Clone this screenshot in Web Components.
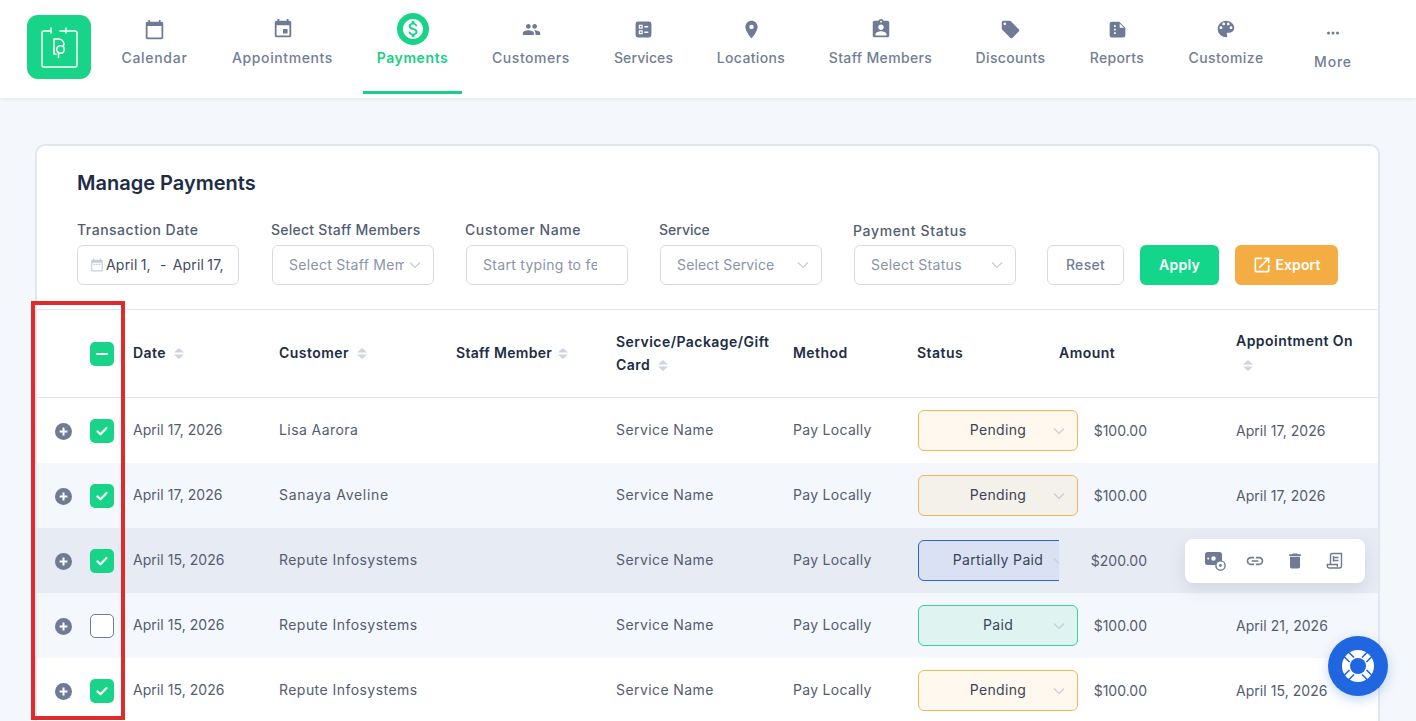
<!DOCTYPE html>
<html lang="en">
<head>
<meta charset="utf-8">
<title>Manage Payments</title>
<style>
  html, body { margin: 0; height: 100%; overflow: hidden; }
  body { background: #f4f7fb; font-family: Inter, "Liberation Sans", sans-serif; color: #535d71; }
</style>
</head>
<body>
<bp-shell>
  <bp-header>
    <bp-logo></bp-logo>
    <bp-nav-item label="Calendar" icon="calendar" style="width:95px;--ls:.7px"></bp-nav-item>
    <bp-nav-item label="Appointments" icon="event" style="width:129px;--ls:.6px"></bp-nav-item>
    <bp-nav-item label="Payments" icon="money" active style="width:99px;--ls:.6px"></bp-nav-item>
    <bp-nav-item label="Customers" icon="people" style="width:106px;--ls:.55px"></bp-nav-item>
    <bp-nav-item label="Services" icon="services" style="width:87px;--ls:.1px"></bp-nav-item>
    <bp-nav-item label="Locations" icon="place" style="width:96px"></bp-nav-item>
    <bp-nav-item label="Staff Members" icon="staff" style="width:131px"></bp-nav-item>
    <bp-nav-item label="Discounts" icon="offer" style="width:97px"></bp-nav-item>
    <bp-nav-item label="Reports" icon="report" style="width:84px"></bp-nav-item>
    <bp-nav-item label="Customize" icon="palette" style="width:102px;--ls:.45px"></bp-nav-item>
    <bp-nav-item label="More" icon="dots" low style="width:80px;--ls:.8px"></bp-nav-item>
  </bp-header>

  <bp-card heading="Manage Payments">
    <bp-filters>
      <bp-field label="Transaction Date" first style="--ls:.5px"><bp-daterange></bp-daterange></bp-field>
      <bp-field label="Select Staff Members" style="--ls:.25px"><bp-select placeholder="Select Staff Members"></bp-select></bp-field>
      <bp-field label="Customer Name" style="--ls:.6px"><bp-select placeholder="Start typing to fetch" plain></bp-select></bp-field>
      <bp-field label="Service" style="--ls:0px"><bp-select placeholder="Select Service" style="--ls:.15px"></bp-select></bp-field>
      <bp-field label="Payment Status" low style="--ls:.65px"><bp-select placeholder="Select Status"></bp-select></bp-field>
      <bp-button kind="ghost" style="width:77px">Reset</bp-button>
      <bp-button kind="green" style="width:79px">Apply</bp-button>
      <bp-button kind="orange" icon style="width:103px">Export</bp-button>
    </bp-filters>
    <bp-table>
      <bp-head></bp-head>
      <bp-row date="April 17, 2026" customer="Lisa Aarora" status="Pending" amount="$100.00" on="April 17, 2026" checked style="--name-ls:.42px"></bp-row>
      <bp-row date="April 17, 2026" customer="Sanaya Aveline" status="Pending" amount="$100.00" on="April 17, 2026" checked stripe style="--name-ls:.7px"></bp-row>
      <bp-row date="April 15, 2026" customer="Repute Infosystems" status="Partially Paid" amount="$200.00" on="" checked hover></bp-row>
      <bp-row date="April 15, 2026" customer="Repute Infosystems" status="Paid" amount="$100.00" on="April 21, 2026" stripe></bp-row>
      <bp-row date="April 15, 2026" customer="Repute Infosystems" status="Pending" amount="$100.00" on="April 15, 2026" checked></bp-row>
    </bp-table>
  </bp-card>

  <bp-actions></bp-actions>
  <bp-help></bp-help>
  <bp-callout></bp-callout>
</bp-shell>

<script>
const ICONS = {
  calendar: '<path d="M20 3h-1V1h-2v2H7V1H5v2H4c-1.1 0-2 .9-2 2v16c0 1.1.9 2 2 2h16c1.1 0 2-.9 2-2V5c0-1.1-.9-2-2-2zm0 18H4V8h16v13z"/>',
  event: '<path d="M17 12h-5v5h5v-5zM16 1v2H8V1H6v2H5c-1.11 0-1.99.9-1.99 2L3 19c0 1.1.89 2 2 2h14c1.1 0 2-.9 2-2V5c0-1.1-.9-2-2-2h-1V1h-2zm3 18H5V8h14v11z"/>',
  money: '<path d="M12 2C6.48 2 2 6.48 2 12s4.48 10 10 10 10-4.48 10-10S17.52 2 12 2zm1.41 16.09V20h-2.67v-1.93c-1.71-.36-3.16-1.46-3.27-3.4h1.96c.1 1.05.82 1.87 2.65 1.87 1.96 0 2.4-.98 2.4-1.59 0-.83-.44-1.61-2.67-2.14-2.48-.6-4.18-1.62-4.18-3.67 0-1.72 1.39-2.84 3.11-3.21V4h2.67v1.95c1.86.45 2.79 1.86 2.87 3.39H14.3c-.05-1.11-.64-1.87-2.22-1.87-1.5 0-2.4.68-2.4 1.64 0 .84.65 1.39 2.67 1.91s4.18 1.39 4.18 3.91c-.01 1.83-1.38 2.83-3.12 3.16z"/>',
  people: '<path d="M16 11c1.66 0 2.99-1.34 2.99-3S17.66 5 16 5c-1.66 0-3 1.34-3 3s1.34 3 3 3zm-8 0c1.66 0 2.99-1.34 2.99-3S9.66 5 8 5C6.34 5 5 6.34 5 8s1.34 3 3 3zm0 2c-2.33 0-7 1.17-7 3.5V19h14v-2.5c0-2.33-4.67-3.5-7-3.5zm8 0c-.29 0-.62.02-.97.05 1.16.84 1.97 1.97 1.97 3.45V19h6v-2.5c0-2.33-4.67-3.5-7-3.5z"/>',
  services: '<path fill-rule="evenodd" d="M5 2h14a3 3 0 0 1 3 3v14a3 3 0 0 1-3 3H5a3 3 0 0 1-3-3V5a3 3 0 0 1 3-3zm1 4v5h5V6H6zm1.5 1.5h2v2h-2v-2zM13 7.5V9.5h5V7.5h-5zM6 13v5h5v-5H6zm1.5 1.5h2v2h-2v-2zM13 14.5v2h5v-2h-5z"/>',
  place: '<path d="M12 2C8.13 2 5 5.13 5 9c0 5.25 7 13 7 13s7-7.75 7-13c0-3.87-3.13-7-7-7zm0 9.5a2.5 2.5 0 0 1 0-5 2.5 2.5 0 0 1 0 5z"/>',
  staff: '<path d="M19 3h-4.18C14.4 1.84 13.3 1 12 1c-1.3 0-2.4.84-2.82 2H5c-1.1 0-2 .9-2 2v14c0 1.1.9 2 2 2h14c1.1 0 2-.9 2-2V5c0-1.1-.9-2-2-2zm-7 0c.55 0 1 .45 1 1s-.45 1-1 1-1-.45-1-1 .45-1 1-1zm0 4c1.66 0 3 1.34 3 3s-1.34 3-3 3-3-1.34-3-3 1.34-3 3-3zm6 12H6v-1.4c0-2 4-3.1 6-3.1s6 1.1 6 3.1V19z"/>',
  offer: '<path d="M21.41 11.58l-9-9C12.05 2.22 11.55 2 11 2H4c-1.1 0-2 .9-2 2v7c0 .55.22 1.05.59 1.42l9 9c.36.36.86.58 1.41.58.55 0 1.05-.22 1.41-.59l7-7c.37-.36.59-.86.59-1.41 0-.55-.23-1.06-.59-1.42zM5.5 7C4.67 7 4 6.33 4 5.5S4.67 4 5.5 4 7 4.67 7 5.5 6.33 7 5.5 7z"/>',
  report: '<path fill-rule="evenodd" d="M5.5 3H14l7 7v8.5a2.5 2.5 0 0 1-2.5 2.5h-13A2.5 2.5 0 0 1 3 18.500v-13A2.500 2.500 0 0 1 5.500 3zM14.500 5v5h5l-5-5zM8 7v2h2V7H8zm0 4v2h2v-2H8zm0 4v2h2v-2H8z"/>',
  palette: '<path d="M12 3c-4.97 0-9 4.03-9 9s4.03 9 9 9c.83 0 1.5-.67 1.5-1.5 0-.39-.15-.74-.39-1.01-.23-.26-.38-.61-.38-.99 0-.83.67-1.5 1.5-1.5H16c2.76 0 5-2.24 5-5 0-4.42-4.03-8-9-8zm-5.5 9c-.83 0-1.5-.67-1.5-1.5S5.67 9 6.5 9 8 9.67 8 10.5 7.33 12 6.5 12zm3-4C8.67 8 8 7.33 8 6.5S8.67 5 9.5 5s1.5.67 1.5 1.5S10.33 8 9.5 8zm5 0c-.83 0-1.5-.67-1.5-1.5S13.67 5 14.5 5s1.5.67 1.5 1.5S15.33 8 14.5 8zm3 4c-.83 0-1.5-.67-1.5-1.5S16.67 9 17.5 9s1.5.67 1.5 1.5-.67 1.5-1.5 1.5z"/>',
  dots: '<circle cx="6" cy="12" r="2"/><circle cx="12" cy="12" r="2"/><circle cx="18" cy="12" r="2"/>',
  link: '<path d="M3.9 12c0-1.71 1.39-3.1 3.1-3.1h4V7H7c-2.76 0-5 2.24-5 5s2.24 5 5 5h4v-1.9H7c-1.71 0-3.1-1.39-3.1-3.1zM8 13h8v-2H8v2zm9-6h-4v1.9h4c1.71 0 3.1 1.39 3.1 3.1s-1.39 3.1-3.1 3.1h-4V17h4c2.76 0 5-2.24 5-5s-2.24-5-5-5z"/>',
  trash: '<path d="M6 19c0 1.1.9 2 2 2h8c1.1 0 2-.9 2-2V7H6v12zM19 4h-3.5l-1-1h-5l-1 1H5v2h14V4z"/>',
  external: '<path d="M19 19H5V5h7V3H5a2 2 0 0 0-2 2v14a2 2 0 0 0 2 2h14c1.1 0 2-.9 2-2v-7h-2v7zM14 3v2h3.59l-9.83 9.83 1.41 1.41L19 6.41V10h2V3h-7z"/>'
};

const svg = (name, size, color) =>
  `<svg width="${size}" height="${size}" viewBox="0 0 24 24" fill="${color}" aria-hidden="true">${ICONS[name]}</svg>`;

const chevron = `<svg width="12" height="8" viewBox="0 0 12 8" fill="none" stroke="#c5ccd9" stroke-width="1.2"><path d="M1 1.5l5 5 5-5"/></svg>`;
const sortArrows = `<svg width="10" height="11" viewBox="0 0 10 11" fill="#cdd4e2"><path d="M5 0l5 4.6H0zM5 11L0 6.4h10z"/></svg>`;

class BpShell extends HTMLElement {
  constructor() {
    super();
    this.attachShadow({mode: 'open'});
    this.shadowRoot.innerHTML = `
      <style>:host { display: block; position: relative; height: 721px; overflow: hidden; }</style>
      <slot></slot>`;
  }
}

class BpHeader extends HTMLElement {
  constructor() {
    super();
    this.attachShadow({mode: 'open'});
    this.shadowRoot.innerHTML = `
      <style>
        :host {
          display: flex; align-items: flex-start; gap: 16px;
          height: 98px; padding-left: 27px; box-sizing: border-box;
          background: #fff; box-shadow: 0 1px 4px rgba(90, 105, 140, .12);
        }
      </style>
      <slot></slot>`;
  }
}

class BpLogo extends HTMLElement {
  constructor() {
    super();
    this.attachShadow({mode: 'open'});
    this.shadowRoot.innerHTML = `
      <style>
        :host { display: block; flex: none; width: 64px; height: 64px; margin-top: 15px; background: #18d488; border-radius: 11px; }
        svg { display: block; }
      </style>
      <svg width="64" height="64" viewBox="0 0 64 64" fill="none" stroke="#fff" stroke-width="1.5" stroke-linecap="round">
        <path d="M24 16h-7a2 2 0 0 0-2 2v32a2 2 0 0 0 2 2h31a2 2 0 0 0 2-2V18a2 2 0 0 0-2-2H33"/>
        <path d="M24 13v5M39 13v5"/>
        <path d="M27 24v15M27 24h5a5 5 0 0 1 4.500 7"/>
        <circle cx="33.500" cy="34.500" r="3.800"/>
        <path d="M31.500 37v5.500M27 39h2"/>
      </svg>`;
  }
}

class BpNavItem extends HTMLElement {
  constructor() {
    super();
    this.attachShadow({mode: 'open'});
  }

  connectedCallback() {
    const active = this.hasAttribute('active');
    const icon = this.getAttribute('icon');
    const sizes = {calendar: 21, people: 19, services: 19, report: 21, dots: 18, offer: 21, place: 21};
    this.shadowRoot.innerHTML = `
      <style>
        :host {
          display: flex; flex-direction: column; align-items: center; flex: none;
          box-sizing: border-box; height: 94px; padding-top: 13px;
          font: 500 14px/20px Inter, "Liberation Sans", sans-serif; letter-spacing: var(--ls, .35px);
          color: #727e95;
        }
        :host([low]) { padding-top: 17px; }
        :host([active]) { color: #18cf86; font-weight: 600; border-bottom: 3px solid #18cf86; }
        .icon { width: 32px; height: 32px; display: flex; align-items: center; justify-content: center; border-radius: 50%; }
        :host([active]) .icon { background: #18d488; }
        .label { margin-top: 3px; white-space: nowrap; }
      </style>
      <div class="icon">${active ? svg(icon, 24, '#fff') : svg(icon, sizes[icon] || 22, '#6f7b94')}</div>
      <div class="label">${this.getAttribute('label')}</div>`;
  }
}

class BpCard extends HTMLElement {
  constructor() {
    super();
    this.attachShadow({mode: 'open'});
  }

  connectedCallback() {
    this.shadowRoot.innerHTML = `
      <style>
        :host {
          display: block; box-sizing: border-box; width: 1345px; margin: 46px 0 0 35px;
          height: 640px; background: #fff; border: 2px solid #e0e7f3; border-radius: 10px;
        }
        h1 { margin: 0; padding: 22px 0 0 40px; font: 600 20px/30px Inter, "Liberation Sans", sans-serif; color: #202c45; }
      </style>
      <h1>${this.getAttribute('heading')}</h1>
      <slot></slot>`;
  }
}

class BpFilters extends HTMLElement {
  constructor() {
    super();
    this.attachShadow({mode: 'open'});
    this.shadowRoot.innerHTML = `
      <style>
        :host {
          display: flex; align-items: flex-end;
          padding: 22px 0 24px 40px; border-bottom: 1px solid #e1e6f0;
        }
        ::slotted(bp-field) { margin-right: 31px; }
        ::slotted(bp-button) { margin-right: 16px; }
      </style>
      <slot></slot>`;
  }
}

class BpField extends HTMLElement {
  constructor() {
    super();
    this.attachShadow({mode: 'open'});
  }

  connectedCallback() {
    this.shadowRoot.innerHTML = `
      <style>
        :host { display: block; width: 163px; flex: none; }
        label {
          display: block; margin-bottom: 5px; white-space: nowrap;
          font: 500 14px/20px Inter, "Liberation Sans", sans-serif; letter-spacing: var(--ls, .3px); color: #535d71;
        }
        :host([low]) label { margin-bottom: 4px; }
        .ctl { margin-left: 1px; --ls: initial; }
        :host([first]) .ctl { margin-left: 0; }
      </style>
      <label>${this.getAttribute('label')}</label>
      <div class="ctl"><slot></slot></div>`;
  }
}

class BpSelect extends HTMLElement {
  constructor() {
    super();
    this.attachShadow({mode: 'open'});
  }

  connectedCallback() {
    this.shadowRoot.innerHTML = `
      <style>
        :host {
          display: flex; align-items: center; box-sizing: border-box; width: 162px; height: 40px;
          padding: 0 12px 0 16px; border: 1px solid #d6dbe6; border-radius: 6px; background: #fff;
          font: 400 14px/20px Inter, "Liberation Sans", sans-serif; letter-spacing: .3px; color: #8a94a8;
        }
        :host([style]) { letter-spacing: var(--ls); }
        .text { flex: 1; min-width: 0; overflow: hidden; white-space: nowrap; }
        svg { flex: none; margin-left: 5px; }
      </style>
      <span class="text">${this.getAttribute('placeholder')}</span>
      ${this.hasAttribute('plain') ? '<span style="width:18px;flex:none"></span>' : chevron}`;
  }
}

class BpDaterange extends HTMLElement {
  constructor() {
    super();
    this.attachShadow({mode: 'open'});
    this.shadowRoot.innerHTML = `
      <style>
        :host {
          display: flex; align-items: center; box-sizing: border-box; width: 162px; height: 40px;
          padding-left: 13px; border: 1px solid #d6dbe6; border-radius: 6px;
          font: 400 14px/20px Inter, "Liberation Sans", sans-serif; letter-spacing: .2px; word-spacing: -1px; color: #3f4a60;
        }
        svg { flex: none; margin: 0 2px 0 -1px; }
        .part { overflow: hidden; white-space: nowrap; flex: none; }
        .a { width: 48px; }
        .sep { margin: 0 6px 0 6px; }
        .b { width: 50px; }
      </style>
      <svg width="14" height="14" viewBox="0 0 24 24" fill="#c5cddb"><path d="M20 3h-1V1h-2v2H7V1H5v2H4c-1.1 0-2 .9-2 2v16c0 1.1.9 2 2 2h16c1.1 0 2-.9 2-2V5c0-1.1-.9-2-2-2zm0 18H4V8h16v13z"/><path d="M6 10h3v2H6zM10.500 10h3v2h-3zM15 10h3v2h-3z"/></svg>
      <span class="part a">April 1, 2026</span><span class="sep">-</span><span class="part b">April 17, 2026</span>`;
  }
}

class BpButton extends HTMLElement {
  constructor() {
    super();
    this.attachShadow({mode: 'open'});
  }

  connectedCallback() {
    this.shadowRoot.innerHTML = `
      <style>
        :host {
          display: flex; align-items: center; justify-content: center; gap: 3px; flex: none;
          box-sizing: border-box; height: 40px; border-radius: 6px;
          font: 500 14px/20px Inter, "Liberation Sans", sans-serif; letter-spacing: .3px;
        }
        :host([kind=ghost]) { border: 1px solid #d6dbe6; color: #727e95; background: #fff; }
        :host([kind=green]) { background: #14d68a; color: #fff; font-weight: 600; }
        :host([kind=orange]) { background: #f4ad42; color: #fff; font-weight: 600; letter-spacing: .1px; }
      </style>
      ${this.hasAttribute('icon') ? svg('external', 20, '#fff') : ''}<slot></slot>`;
  }
}

class BpTable extends HTMLElement {
  constructor() {
    super();
    this.attachShadow({mode: 'open'});
    this.shadowRoot.innerHTML = `
      <style>
        :host {
          display: block;
          --cols: 96px 146px 177px 160px 177px 124px 142px 177px 142px;
        }
      </style>
      <slot></slot>`;
  }
}

class BpHead extends HTMLElement {
  constructor() {
    super();
    this.attachShadow({mode: 'open'});
    this.shadowRoot.innerHTML = `
      <style>
        :host {
          display: grid; grid-template-columns: var(--cols); align-items: center;
          height: 88px; box-sizing: border-box; border-bottom: 1px solid #dfe4ee;
          font: 600 14px/23px Inter, "Liberation Sans", sans-serif; letter-spacing: .46px; color: #202c45;
        }
        svg { margin-left: 4px; vertical-align: -1px; }
        .t { padding-bottom: 2px; }
        .pick { padding-left: 53px; display: flex; }
        .staff { letter-spacing: .32px; }
        .staff svg { margin-left: 2px; }
        .arrows { display: block; height: 23px; padding: 1px 0 0 3px; }
      </style>
      <div class="pick"><bp-check state="mixed"></bp-check></div>
      <div class="t">Date ${sortArrows}</div>
      <div class="t">Customer ${sortArrows}</div>
      <div class="t staff">Staff Member ${sortArrows}</div>
      <div class="t">Service/Package/Gift<br>Card ${sortArrows}</div>
      <div class="t">Method</div>
      <div class="t">Status</div>
      <div class="t">Amount</div>
      <div class="t">Appointment On<span class="arrows">${sortArrows}</span></div>`;
  }
}

class BpCheck extends HTMLElement {
  constructor() {
    super();
    this.attachShadow({mode: 'open'});
  }

  connectedCallback() {
    const state = this.getAttribute('state');
    const mark = state === 'mixed'
      ? '<svg width="14" height="14" viewBox="0 0 14 14"><path d="M2 7h10" stroke="#fff" stroke-width="2" stroke-linecap="round"/></svg>'
      : state === 'on'
        ? '<svg width="14" height="14" viewBox="0 0 14 14" fill="none"><path d="M2.500 7.400l3 2.800L11.500 4" stroke="#fff" stroke-width="2.200" stroke-linecap="round" stroke-linejoin="round"/></svg>'
        : '';
    this.shadowRoot.innerHTML = `
      <style>
        :host {
          display: flex; align-items: center; justify-content: center; flex: none;
          box-sizing: border-box; width: 24px; height: 24px; border-radius: 5px;
          background: #18d488;
        }
        :host([state=off]) { background: #fff; border: 1px solid #727e95; }
      </style>${mark}`;
  }
}

class BpRow extends HTMLElement {
  constructor() {
    super();
    this.attachShadow({mode: 'open'});
  }

  connectedCallback() {
    const a = name => this.getAttribute(name);
    this.shadowRoot.innerHTML = `
      <style>
        :host {
          display: grid; grid-template-columns: var(--cols); align-items: center;
          height: 65px; background: #fff;
          font: 400 14px/20px Inter, "Liberation Sans", sans-serif; letter-spacing: .42px; color: #535d71;
        }
        :host([stripe]) { background: #f4f7fb; }
        :host([hover]) { background: #e7ebf4; }
        .t { padding-bottom: 2px; }
        .pick { display: flex; align-items: center; padding-left: 18px; gap: 18px; }
        .plus { flex: none; margin-top: 2px; }
        .num { letter-spacing: .05px; }
        .name { letter-spacing: var(--name-ls, .45px); }
        .method { letter-spacing: .3px; }
        .amount { width: 88px; text-align: right; letter-spacing: 0; }
      </style>
      <div class="pick">
        <svg class="plus" width="17" height="17" viewBox="0 0 17 17"><circle cx="8.500" cy="8.500" r="8.500" fill="#6f7b94"/><path d="M8.500 4.600v7.800M4.600 8.500h7.800" stroke="#fff" stroke-width="2"/></svg>
        <bp-check state="${this.hasAttribute('checked') ? 'on' : 'off'}"></bp-check>
      </div>
      <div class="t num">${a('date')}</div>
      <div class="t name">${a('customer')}</div>
      <div></div>
      <div class="t">Service Name</div>
      <div class="t method">Pay Locally</div>
      <div><bp-status value="${a('status')}"></bp-status></div>
      <div class="amount">${a('amount')}</div>
      <div class="num">${a('on')}</div>`;
  }
}

class BpStatus extends HTMLElement {
  constructor() {
    super();
    this.attachShadow({mode: 'open'});
  }

  connectedCallback() {
    const value = this.getAttribute('value');
    const tone = {
      'Pending': ['#f2b55e', 'rgba(244, 173, 66, .09)'],
      'Paid': ['#38d09e', 'rgba(40, 225, 150, .1)'],
      'Partially Paid': ['#2a66d6', 'rgba(40, 100, 225, .07)']
    }[value];
    const clip = value === 'Partially Paid';
    this.shadowRoot.innerHTML = `
      <style>
        :host { display: block; width: ${clip ? 142 : 161}px; height: 41px; overflow: hidden; }
        .box {
          display: flex; align-items: center; justify-content: center; position: relative;
          box-sizing: border-box; width: 160px; height: 41px; margin-left: 1px; padding-bottom: 2px;
          border: 1px solid ${tone[0]}; border-radius: 6px; background: ${tone[1]};
          font: 400 14px/20px Inter, "Liberation Sans", sans-serif; letter-spacing: .36px; color: #3a4459;
        }
        svg { position: absolute; right: 12px; top: 16px; }
      </style>
      <div class="box"><span>${value}</span>${chevron}</div>`;
  }
}

class BpActions extends HTMLElement {
  constructor() {
    super();
    this.attachShadow({mode: 'open'});
    this.shadowRoot.innerHTML = `
      <style>
        :host {
          position: absolute; left: 1185px; top: 539px; width: 180px; height: 44px; box-sizing: border-box;
          display: flex; align-items: center; gap: 20px; padding-left: 20px;
          background: #fff; border-radius: 8px; box-shadow: 0 6px 16px rgba(90, 105, 140, .16);
        }
        svg { flex: none; }
        .first { margin-right: -2px; }
      </style>
      <svg class="first" width="22" height="20" viewBox="0 0 22 20"><rect x="0" y="1" width="17" height="13" rx="2.500" fill="#6f7b94"/><circle cx="8.500" cy="7.500" r="2.200" fill="#fff"/><circle cx="3.200" cy="7.500" r="1" fill="#fff"/><circle cx="15.500" cy="14.500" r="4.600" fill="#fff" stroke="#6f7b94" stroke-width="1.400"/><circle cx="15.500" cy="14.500" r="1.400" fill="#6f7b94"/></svg>
      ${svg('link', 20, '#6f7b94')}
      ${svg('trash', 20, '#6f7b94')}
      <svg width="20" height="20" viewBox="0 0 20 20" fill="none" stroke="#6f7b94" stroke-width="1.400"><path d="M5.500 13.500V4.200C5.500 3 6.200 2.500 7 2.500h9.500v12.300a2.200 2.200 0 0 1-2.200 2.200H4.500A2.200 2.200 0 0 1 2.300 15v-1.500h10v2.200"/><path d="M8.500 6.500h5M8.500 9.500h5M8.500 5v5.500"/></svg>`;
  }
}

class BpHelp extends HTMLElement {
  constructor() {
    super();
    this.attachShadow({mode: 'open'});
    this.shadowRoot.innerHTML = `
      <style>
        :host {
          position: absolute; left: 1328px; top: 636px; width: 60px; height: 60px;
          display: flex; align-items: center; justify-content: center;
          background: #2066e0; border-radius: 50%; box-shadow: 0 4px 12px rgba(32, 102, 224, .25);
        }
      </style>
      <svg width="34" height="34" viewBox="-17 -17 34 34">
        <circle r="16" fill="#fff"/>
        <circle r="8" fill="#2066e0"/>
        <g stroke="#2066e0" stroke-width="1.600" fill="none">
          <path d="M4 8.500l6.500 6.500M8.500 4l6.500 6.500M-4 8.500l-6.500 6.500M-8.500 4l-6.500 6.500M4-8.500l6.500-6.500M8.500-4l6.500-6.500M-4-8.500l-6.500-6.500M-8.500-4l-6.500-6.500"/>
        </g>
      </svg>`;
  }
}

class BpCallout extends HTMLElement {
  constructor() {
    super();
    this.attachShadow({mode: 'open'});
    this.shadowRoot.innerHTML = `
      <style>
        :host {
          position: absolute; left: 31px; top: 301px; width: 94px; height: 419px;
          box-sizing: border-box; border: 4.500px solid #e02b2b; pointer-events: none;
        }
      </style>`;
  }
}

customElements.define('bp-shell', BpShell);
customElements.define('bp-header', BpHeader);
customElements.define('bp-logo', BpLogo);
customElements.define('bp-nav-item', BpNavItem);
customElements.define('bp-card', BpCard);
customElements.define('bp-filters', BpFilters);
customElements.define('bp-field', BpField);
customElements.define('bp-select', BpSelect);
customElements.define('bp-daterange', BpDaterange);
customElements.define('bp-button', BpButton);
customElements.define('bp-table', BpTable);
customElements.define('bp-head', BpHead);
customElements.define('bp-check', BpCheck);
customElements.define('bp-row', BpRow);
customElements.define('bp-status', BpStatus);
customElements.define('bp-actions', BpActions);
customElements.define('bp-help', BpHelp);
customElements.define('bp-callout', BpCallout);
</script>
</body>
</html>
